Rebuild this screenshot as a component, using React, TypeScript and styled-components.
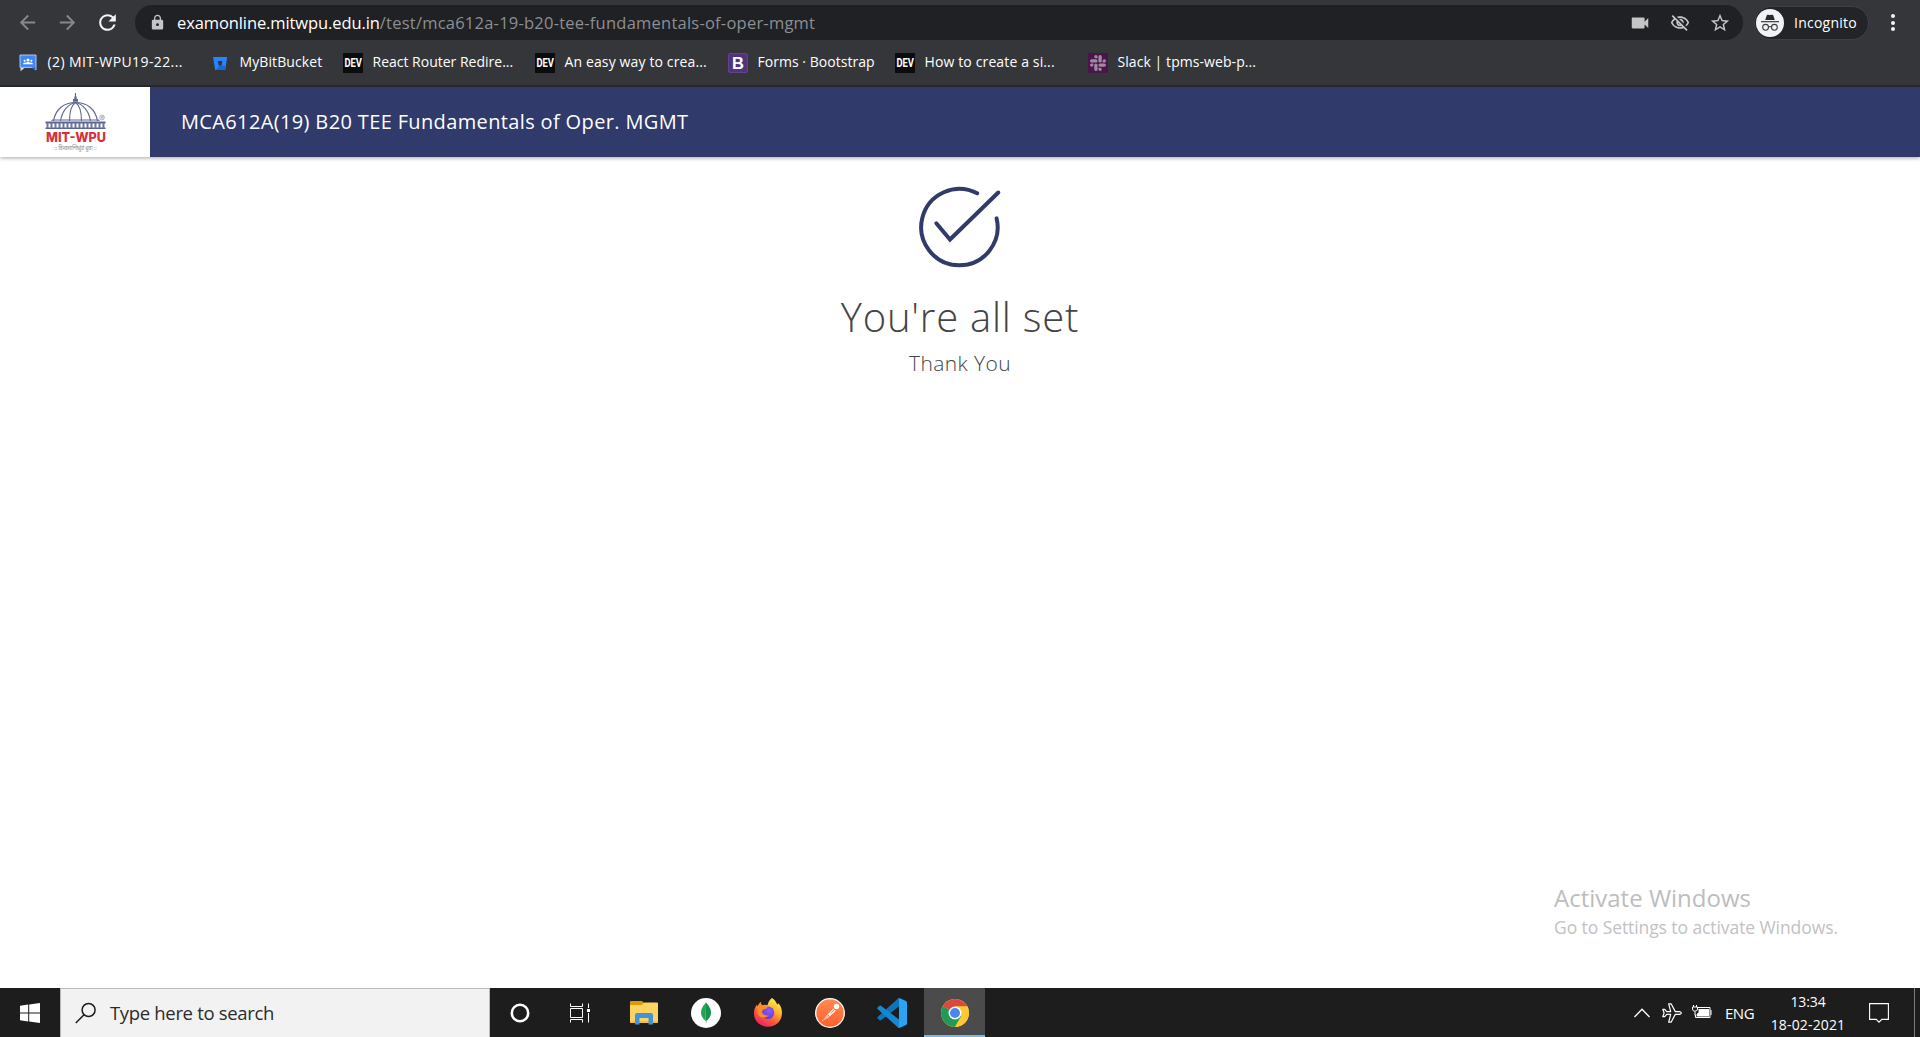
import React from "react";
import styled, { createGlobalStyle } from "styled-components";
import {
  MdArrowBack,
  MdArrowForward,
  MdRefresh,
  MdLock,
  MdVideocam,
  MdOutlineVisibilityOff,
  MdStarOutline,
} from "react-icons/md";
import { SiSlack } from "react-icons/si";

const NAVY = "#303a6b";

const Global = createGlobalStyle`
  * { box-sizing: border-box; }
  body { margin: 0; background: #fff; overflow: hidden; font-family: "Open Sans", "Noto Sans", sans-serif; }
  svg { display: block; flex: none; }
`;

const Label = styled.span<{ $size: number; $track?: number; $color?: string }>`
  font-size: ${(p) => p.$size}px;
  letter-spacing: ${(p) => p.$track ?? 0}px;
  color: ${(p) => p.$color ?? "#fff"};
  white-space: pre;
`;

const Screen = styled.div`
  display: flex;
  flex-direction: column;
  width: 1920px;
  height: 1037px;
  background: #fff;
`;

/* ---------- browser chrome ---------- */

const Chrome = styled.div`
  height: 87px;
  background: #35363a;
  border-bottom: 2px solid #292a2b;
`;

const Toolbar = styled.div`
  display: flex;
  align-items: center;
  height: 45px;
  padding-left: 16px;
`;

const NavButton = styled.span<{ $dim?: boolean; $w: number }>`
  display: flex;
  width: ${(p) => p.$w}px;
  color: ${(p) => (p.$dim ? "#87888a" : "#f1f3f4")};
`;

const Omnibox = styled.div`
  display: flex;
  align-items: center;
  width: 1608px;
  height: 35px;
  padding: 0 12px 0 14px;
  border-radius: 18px;
  background: #202124;
  color: #c4c5c6;
`;

const Url = styled.div`
  flex: 1;
  margin-left: 11px;
  line-height: 35px;
`;

const OmniIcons = styled.div`
  display: flex;
  align-items: center;
  justify-content: space-between;
  width: 102px;
`;

const IncognitoPill = styled.div`
  display: flex;
  align-items: center;
  gap: 10px;
  width: 115px;
  height: 34px;
  margin-left: 11px;
  padding-left: 1px;
  border: 1px solid #3f4043;
  border-radius: 17px;
  background: #232427;
`;

const MenuDots = styled.div`
  display: flex;
  flex-direction: column;
  gap: 2.5px;
  margin-left: 21.5px;
  i {
    width: 4px;
    height: 4px;
    border-radius: 50%;
    background: #f1f3f4;
  }
`;

const Bookmarks = styled.div`
  display: flex;
  align-items: center;
  height: 36px;
  padding-left: 18px;
`;

const Bookmark = styled.div<{ $w: number }>`
  display: flex;
  align-items: center;
  gap: 9.5px;
  width: ${(p) => p.$w}px;
  line-height: 20px;
  > ${Label} {
    padding-bottom: 2px;
  }
`;

/* ---------- exam page ---------- */

const Header = styled.header`
  display: flex;
  height: 70px;
  flex: none;
  background: ${NAVY};
  box-shadow: 0 1px 4px rgba(0, 0, 0, 0.35);
`;

const LogoBox = styled.div`
  width: 150px;
  height: 70px;
  padding: 6px 0 0 44px;
  background: #fff;
`;

const Title = styled.div`
  padding-left: 31px;
  line-height: 70px;
`;

const Main = styled.main`
  display: flex;
  flex: 1;
  flex-direction: column;
  align-items: center;
  padding-top: 26.5px;
`;

const Heading = styled.h1`
  margin: 19.5px 0 0;
  color: #444;
  font-size: 40px;
  font-weight: 300;
  letter-spacing: 0.78px;
  line-height: 60px;
`;

const SubHeading = styled.p`
  margin: 0;
  color: #444;
  font-size: 21px;
  font-weight: 300;
  letter-spacing: 0.4px;
  line-height: 32px;
`;

const Watermark = styled.div`
  position: absolute;
  left: 1554px;
  top: 881px;
  display: flex;
  flex-direction: column;
  line-height: 33px;
  span + span {
    line-height: 26px;
  }
`;

/* ---------- taskbar ---------- */

const Taskbar = styled.div`
  display: flex;
  height: 49px;
  background: #1d1d1d;
`;

const StartButton = styled.div`
  display: flex;
  align-items: center;
  justify-content: center;
  width: 60px;
`;

const SearchBox = styled.div`
  display: flex;
  align-items: center;
  gap: 13px;
  width: 430px;
  padding-left: 14px;
  border: 1px solid #b9b9b9;
  border-bottom: 0;
  background: #f2f2f2;
  > ${Label} {
    padding-bottom: 2px;
  }
`;

const TaskButton = styled.div<{ $w: number; $active?: boolean }>`
  display: flex;
  align-items: center;
  justify-content: center;
  width: ${(p) => p.$w}px;
  background: ${(p) => (p.$active ? "#4b4b4b" : "transparent")};
  box-shadow: ${(p) => (p.$active ? "inset 0 -2px #76b9ed" : "none")};
  padding-top: 1px;
`;

const Tray = styled.div`
  display: flex;
  align-items: center;
  margin-left: auto;
`;

const TraySlot = styled.div<{ $w: number }>`
  display: flex;
  width: ${(p) => p.$w}px;
`;

const Clock = styled.div`
  display: flex;
  flex-direction: column;
  align-items: center;
  width: 76px;
  margin-right: 23px;
  line-height: 23px;
`;

const DesktopEdge = styled.div`
  width: 6px;
  height: 49px;
  margin-left: 25px;
  border-left: 1px solid #7c7c7c;
`;

/* ---------- drawings ---------- */

const Classroom = () => (
  <svg width="20" height="20" viewBox="0 0 20 20">
    <path d="M2.500 15h4l-4 3.200z" fill="#d7d9dc" />
    <path d="M2 2h16v15l-3-2.600H2z" fill="#4285f4" stroke="#a9c7fa" strokeWidth="1" />
    <path d="M13.500 14.600h3.800v3.400z" fill="#1f5fd0" />
    <g fill="#fff">
      <circle cx="10" cy="7" r="1.500" />
      <circle cx="6.600" cy="7.800" r="1" />
      <circle cx="13.400" cy="7.800" r="1" />
      <path d="M5 11.200q0-1.700 2-1.700.6 0 1 .2.800-.700 2-.700t2 .700q.4-.2 1-.2 2 0 2 1.700z" />
    </g>
  </svg>
);

const Bitbucket = () => (
  <svg width="20" height="20" viewBox="0 0 20 20">
    <path fill="#2684ff" d="M3 4h14.200l-2 13H5.200z" />
    <path fill="#1767df" d="M11.800 12.200 15.700 13l-.6 4H6l3-4z" />
    <path fill="#35363a" d="M7.800 8h4.600l-.8 4.400H8.700z" />
  </svg>
);

const Tile = styled.span<{ $bg: string; $fg?: string }>`
  display: flex;
  flex: none;
  align-items: center;
  justify-content: center;
  width: 20px;
  height: 20px;
  background: ${(p) => p.$bg};
  color: ${(p) => p.$fg ?? "#fff"};
`;

const DevTile = styled(Tile)`
  font: 700 13px/20px Roboto, sans-serif;
  span {
    transform: scaleX(0.72);
  }
`;

const Dev = () => (
  <DevTile $bg="#0c0c0d">
    <span>DEV</span>
  </DevTile>
);

const BootstrapTile = styled(Tile)`
  border: 1px solid #5f4689;
  border-radius: 2px;
  font: 700 16.5px/18px "Liberation Sans", sans-serif;
`;

const IncognitoIcon = () => (
  <svg width="28" height="28" viewBox="0 0 28 28">
    <circle cx="14" cy="14" r="14" fill="#f1f3f4" />
    <path d="M9.200 11 10.700 6.400q.3-.9 1.200-.7l2.100.4 2.100-.4q.9-.2 1.200.7L18.800 11z" fill="#2a2b2e" />
    <path d="M5 12.700h18" stroke="#2a2b2e" strokeWidth="1.100" />
    <g fill="none" stroke="#3c3d40" strokeWidth="1.100">
      <circle cx="9.600" cy="18.300" r="2.900" />
      <circle cx="18.400" cy="18.300" r="2.900" />
      <path d="M12.500 18q1.500-1 3 0" />
    </g>
  </svg>
);

const MitLogo = () => {
  const columns = Array.from({ length: 15 }, (_, i) => 3.5 + i * 4);
  return (
    <svg width="66" height="62" viewBox="0 0 66 62">
      <g fill="none" stroke="#5d6794" strokeWidth="1.100">
        <path d="M9.500 28C11.500 16 20 9.500 31.500 9.500S51.500 16 53.500 28" />
        <path d="M16.500 28C18 18 24 11 31.500 9.500 39 11 45 18 46.500 28" />
        <path d="M25.500 28C25.500 19 28 12 31.500 9.500 35 12 37.500 19 37.500 28" />
        <path d="M31.500 0v4" />
      </g>
      <path d="M30.300 3.500h2.400v2.500h1.300v2.800h-5V6h1.300z" fill="#5d6794" />
      <path d="M1.500 28.500h60v2h-60zM1.500 34.500h60v1.500h-60z" fill="#5d6794" />
      <path d="M8 28v-1h47v1" stroke="#5d6794" fill="none" />
      <g stroke="#6b749d" strokeWidth="2">
        {columns.map((x) => (
          <path key={x} d={`M${x} 30v5`} />
        ))}
      </g>
      <circle cx="58" cy="24.500" r="2.400" fill="none" stroke="#8990b0" strokeWidth=".7" />
      <text x="56.900" y="26" fontFamily="Roboto, sans-serif" fontSize="4" fill="#6b749d">R</text>
      <text x="2" y="48.800" fontFamily="Inter, sans-serif" fontWeight="800" fontSize="13.300" fill="#d8303a" textLength="60" lengthAdjust="spacingAndGlyphs">MIT-WPU</text>
      <text x="10.500" y="57.300" fontFamily="Noto Sans, sans-serif" fontSize="5.500" fill="#8a8a8a" textLength="42" lengthAdjust="spacingAndGlyphs">:: विश्वशान्तिर्ध्रुवं ध्रुवा ::</text>
    </svg>
  );
};

const CheckMark = () => (
  <svg width="84" height="84" viewBox="0 0 84 84" fill="none" stroke={NAVY} strokeWidth="4" strokeLinecap="round">
    <path d="M59.200 9.300A38.200 38.200 0 1 0 78.600 34.400" />
    <path d="M18.300 39.300 32 55.500 80.300 8.500" strokeLinejoin="miter" />
  </svg>
);

const WindowsLogo = () => (
  <svg width="20" height="20" viewBox="0 0 20 20" fill="#fff">
    <path d="M0 2.700 8.200 1.500v8H0zM9.200 1.400 20 0v9.500H9.200zM0 10.500h8.200v8L0 17.300zM9.200 10.500H20V20L9.200 18.600z" />
  </svg>
);

const SearchGlyph = () => (
  <svg width="22" height="22" viewBox="0 0 22 22" fill="none" stroke="#1c1c1c" strokeWidth="1.500">
    <circle cx="13.600" cy="8" r="6.500" />
    <path d="M9 12.800.8 21" />
  </svg>
);

const Cortana = () => (
  <svg width="20" height="20" viewBox="0 0 20 20">
    <circle cx="10" cy="10" r="8.200" fill="none" stroke="#fff" strokeWidth="2.500" />
  </svg>
);

const TaskView = () => (
  <svg width="20" height="20" viewBox="0 0 20 20" fill="none" stroke="#fff" strokeWidth="1">
    <path d="M.5.500v3h12v-3M.5 19.500v-3h12v3M.5 5.500h12v9H.5zM18.500.500v4.500M18.500 10v9.500" />
    <path d="M17 6h3v3h-3z" fill="#fff" stroke="none" />
  </svg>
);

const Folder = () => (
  <svg width="28" height="24" viewBox="0 0 28 24">
    <path d="M0 1q0-1 1-1h11l2 2-2 3H0z" fill="#dd9a08" />
    <path d="M0 4h11.500l2.500-2.500H27q1 0 1 1V22H0z" fill="#ffd362" />
    <path d="M0 20h28v2H0z" fill="#f2bd45" />
    <path d="M5 23.500V14q0-2 2-2h14q2 0 2 2v9.500h-4.500V17h-9v6.500z" fill="#3b96dd" />
  </svg>
);

const Mongo = () => (
  <svg width="30" height="30" viewBox="0 0 30 30">
    <circle cx="15" cy="15" r="15" fill="#fff" />
    <path d="M15 4.500C11.500 8.500 10 11 10 14.500c0 4 2.500 6.500 4.600 8.500z" fill="#23a455" />
    <path d="M15 4.500c3.500 4 5 6.500 5 10 0 4-2.500 6.500-4.600 8.500h-.8z" fill="#16924a" />
    <path d="M14.700 22.500h.7l.2 2.800h-1z" fill="#9fb7a8" />
  </svg>
);

const Firefox = () => (
  <svg width="30" height="30" viewBox="0 0 30 30">
    <defs>
      <linearGradient id="fxBody" x1=".8" y1=".05" x2=".25" y2="1">
        <stop offset="0" stopColor="#fff44f" />
        <stop offset=".35" stopColor="#ffb02e" />
        <stop offset=".65" stopColor="#ff5a36" />
        <stop offset="1" stopColor="#e81e6b" />
      </linearGradient>
      <radialGradient id="fxGlobe" cx=".6" cy=".3" r=".8">
        <stop offset="0" stopColor="#9059ff" />
        <stop offset="1" stopColor="#5b3bc9" />
      </radialGradient>
    </defs>
    <path d="M19 0c3 2 4.500 4.500 5.200 6.500.8-.2 1-.6 1-1.500C28 8 29 11.500 29 15c0 8-6 13.700-14 13.700S1 23 1 15.500c0-4 1-6.500 3-9l.4 2L7.500 4l1.300 3.500c2-1 4-.8 5.700-.2C15 4.500 16.500 2 19 0z" fill="url(#fxBody)" />
    <circle cx="15" cy="14.800" r="6.300" fill="url(#fxGlobe)" />
    <path d="M4.400 8.500 7.500 4l1.300 3.500c2-1 4.200-.5 6 .5 0 2-1.800 3-3.800 3.200-1.500.2-1.300 1.800-2.300 2.800 1.500 3 4 4 7 3.200-2 3-8.500 3.500-11.200-1.200z" fill="#ff8a2a" />
  </svg>
);

const Postman = () => (
  <svg width="30" height="30" viewBox="0 0 30 30">
    <defs>
      <linearGradient id="pmBody" x1="0" y1="0" x2="0" y2="1">
        <stop offset="0" stopColor="#ff8b52" />
        <stop offset="1" stopColor="#ff5f2c" />
      </linearGradient>
    </defs>
    <circle cx="15" cy="15" r="14.300" fill="url(#pmBody)" stroke="#fff" strokeWidth="1.300" />
    <path d="M6.500 23.500 12 17 18.500 10.500l2.300 2.300-6.500 6z" fill="#fff" opacity=".9" />
    <circle cx="21.500" cy="8.500" r="2.700" fill="#fff" />
    <path d="m8 22 6-5M12.500 16.500l2.300 2.500M15.500 15.500l3.500-3.300" stroke="#ff7440" strokeWidth=".9" />
    <path d="M19 11.200q1.500.2 2.200 1.500" stroke="#ff7440" strokeWidth=".8" fill="none" />
  </svg>
);

const VsCode = () => (
  <svg width="30" height="30" viewBox="0 0 30 30">
    <path d="M22 0v8.500L4 22.300q-.8.500-1.500 0L.6 20.500q-.8-.8 0-1.600L21 .6z" fill="#0f73b8" />
    <path d="M22 30v-8.500L4 7.700q-.8-.5-1.500 0L.6 9.500q-.8.800 0 1.600L21 29.400z" fill="#1488d2" />
    <path d="M21.200.4Q22 0 23 .3l6 2.700q1 .5 1 1.500v21q0 1-1 1.500l-6 2.700q-1 .3-1.800-.5.8.5.8-1V1.500q0-1.500-.8-1.100z" fill="#29a3f2" />
  </svg>
);

const ChromeLogo = () => (
  <svg width="28" height="28" viewBox="0 0 28 28">
    <circle cx="14" cy="14" r="14" fill="#fcc934" />
    <path d="M14 14 1.900 7A14 14 0 0 0 14 28l6.100-10.500z" fill="#229a55" />
    <path d="M14 14 1.900 7A14 14 0 0 1 26.100 7L25.900 7.600H14z" fill="#d9493c" />
    <path d="M14 28a14 14 0 0 0 12.100-21L25.800 7.600H14L20.100 17.500z" fill="#fcc934" />
    <circle cx="14" cy="14" r="6.500" fill="#fff" />
    <circle cx="14" cy="14" r="5" fill="#4a86ee" />
  </svg>
);

const Chevron = () => (
  <svg width="16" height="10" viewBox="0 0 16 10" fill="none" stroke="#fff" strokeWidth="1.300">
    <path d="M.5 9 8 1.300 15.500 9" />
  </svg>
);

const Airplane = () => (
  <svg width="20" height="20" viewBox="0 0 20 20" fill="none" stroke="#fff" strokeWidth="1.200" strokeLinejoin="round">
    <path d="M.8 6.300h1.900L4.700 8.600h4L6.700.8h2.400l4.200 7.800h4.200q1.800.2 1.800 1.400t-1.800 1.400h-4.200l-4.200 7.800H6.700l2-7.800h-4l-2 2.300H.8L2.100 10z" />
  </svg>
);

const Battery = () => (
  <svg width="20" height="15" viewBox="0 0 20 15" fill="none" stroke="#fff" strokeWidth="1">
    <path d="M5.500 2.500h12.500v10H3.500v-3M19 5v5" />
    <path d="M6.500 4h10.500v7.500H4.700V9l1.800-1.500z" fill="#fff" stroke="none" />
    <path d="M1.500 0v2M4.500 0v2M.5 2h5v2q0 2-2.500 2.300Q.5 6 .5 4zM3 6.500v4" />
  </svg>
);

const ActionCenter = () => (
  <svg width="20" height="20" viewBox="0 0 20 20" fill="none" stroke="#fff" strokeWidth="1.100">
    <path d="M.6.600h18.800v15.800h-6.600L10 19.200l-2.800-2.800H.6z" />
  </svg>
);

/* ---------- data ---------- */

const bookmarks: { label: string; track: number; w: number; icon: React.ReactNode }[] = [
  { label: "(2) MIT-WPU19-22...", track: 0.4, w: 192, icon: <Classroom /> },
  { label: "MyBitBucket", track: 0.1, w: 133, icon: <Bitbucket /> },
  { label: "React Router Redire...", track: 0, w: 192, icon: <Dev /> },
  { label: "An easy way to crea...", track: 0.13, w: 193, icon: <Dev /> },
  { label: "Forms · Bootstrap", track: 0.03, w: 167, icon: <BootstrapTile $bg="#50347c">B</BootstrapTile> },
  { label: "How to create a si...", track: 0.13, w: 193, icon: <Dev /> },
  { label: "Slack | tpms-web-p...", track: 0.07, w: 180, icon: <Tile $bg="#4a154b" $fg="#a189a3"><SiSlack size={16} /></Tile> },
];

export default function App() {
  return (
    <Screen>
      <Global />
      <Chrome>
        <Toolbar>
          <NavButton $dim $w={40}><MdArrowBack size={23} /></NavButton>
          <NavButton $dim $w={39}><MdArrowForward size={23} /></NavButton>
          <NavButton $w={40}><MdRefresh size={25} /></NavButton>
          <Omnibox>
            <MdLock size={17} />
            <Url>
              <Label $size={16.5} $track={-0.1}>examonline.mitwpu.edu.in</Label>
              <Label $size={16.5} $track={0.23} $color="#8d8f92">/test/mca612a-19-b20-tee-fundamentals-of-oper-mgmt</Label>
            </Url>
            <OmniIcons>
              <MdVideocam size={22} />
              <MdOutlineVisibilityOff size={20} />
              <MdStarOutline size={22} />
            </OmniIcons>
          </Omnibox>
          <IncognitoPill>
            <IncognitoIcon />
            <Label $size={14} $track={0.25}>Incognito</Label>
          </IncognitoPill>
          <MenuDots><i /><i /><i /></MenuDots>
        </Toolbar>
        <Bookmarks>
          {bookmarks.map((b) => (
            <Bookmark key={b.label} $w={b.w}>
              {b.icon}
              <Label $size={14} $track={b.track}>{b.label}</Label>
            </Bookmark>
          ))}
        </Bookmarks>
      </Chrome>

      <Header>
        <LogoBox><MitLogo /></LogoBox>
        <Title>
          <Label $size={20} $track={0.36}>MCA612A(19) B20 TEE Fundamentals of Oper. MGMT</Label>
        </Title>
      </Header>

      <Main>
        <CheckMark />
        <Heading>You're all set</Heading>
        <SubHeading>Thank You</SubHeading>
      </Main>

      <Watermark>
        <Label $size={24} $color="#bdbdbd">Activate Windows</Label>
        <Label $size={17.5} $track={-0.08} $color="#c2c2c2">Go to Settings to activate Windows.</Label>
      </Watermark>

      <Taskbar>
        <StartButton><WindowsLogo /></StartButton>
        <SearchBox>
          <SearchGlyph />
          <Label $size={18.5} $track={-0.33} $color="#2b2b2b">Type here to search</Label>
        </SearchBox>
        <TaskButton $w={60}><Cortana /></TaskButton>
        <TaskButton $w={60}><TaskView /></TaskButton>
        <TaskButton $w={67}><Folder /></TaskButton>
        <TaskButton $w={58}><Mongo /></TaskButton>
        <TaskButton $w={66}><Firefox /></TaskButton>
        <TaskButton $w={58}><Postman /></TaskButton>
        <TaskButton $w={65}><VsCode /></TaskButton>
        <TaskButton $w={61} $active><ChromeLogo /></TaskButton>
        <Tray>
          <TraySlot $w={28}><Chevron /></TraySlot>
          <TraySlot $w={30}><Airplane /></TraySlot>
          <TraySlot $w={33}><Battery /></TraySlot>
          <TraySlot $w={45}><Label $size={15} $track={-0.5}>ENG</Label></TraySlot>
          <Clock>
            <Label $size={14} $track={-0.1}>13:34</Label>
            <Label $size={14} $track={0.15}>18-02-2021</Label>
          </Clock>
          <ActionCenter />
          <DesktopEdge />
        </Tray>
      </Taskbar>
    </Screen>
  );
}
